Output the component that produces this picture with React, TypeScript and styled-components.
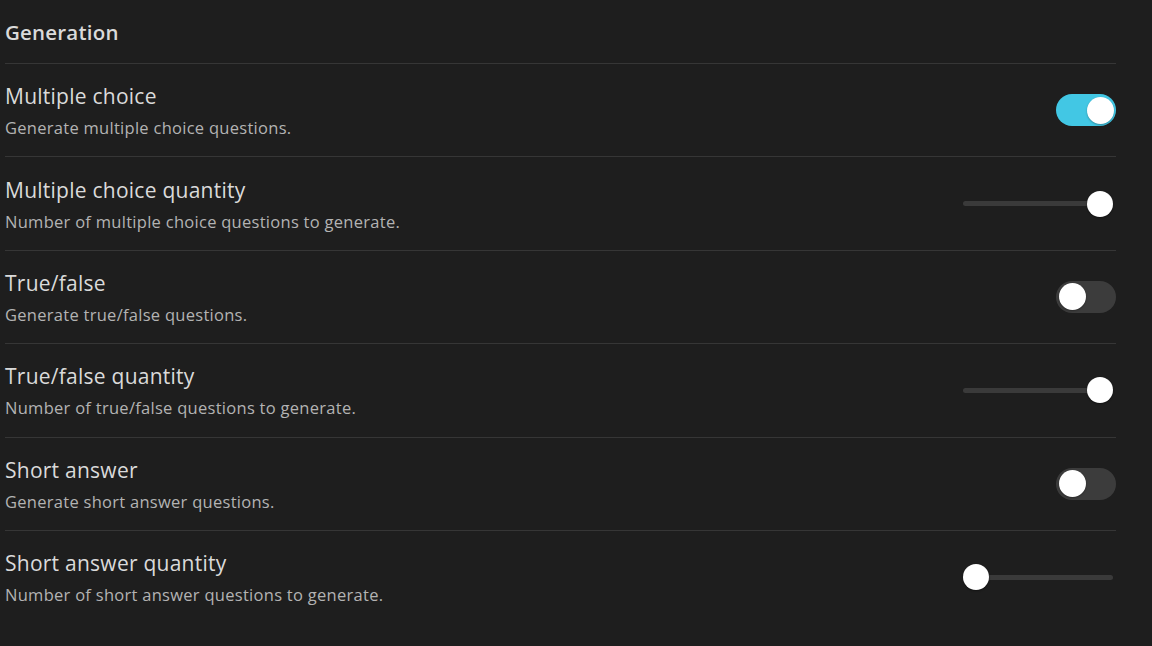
import React, { useState } from "react";
import styled, { createGlobalStyle } from "styled-components";

const Global = createGlobalStyle`
  html, body { margin: 0; padding: 0; background: #1e1e1e; }
  body { font-family: "Open Sans", "Noto Sans", sans-serif; color: #dadada; }
`;

const Page = styled.div`
  width: 1111px;
  padding-left: 5px;
  background: #1e1e1e;
  min-height: 646px;
  box-sizing: content-box;
`;

const Heading = styled.h2`
  margin: 0;
  height: 63px;
  display: flex;
  align-items: center;
  font-size: 20.5px;
  font-weight: 600;
  color: #dadada;
  letter-spacing: 0.2px;
`;

const Row = styled.div`
  box-sizing: border-box;
  height: 93.4px;
  border-top: 1px solid #363636;
  display: flex;
  align-items: center;
  justify-content: space-between;
`;

const Info = styled.div`
  display: flex;
  flex-direction: column;
  gap: 8px;
  padding-top: 2px;
`;

const Name = styled.div`
  font-size: 21px;
  line-height: 26px;
  color: #dadada;
  letter-spacing: 0.25px;
`;

const Desc = styled.div`
  font-size: 16.5px;
  line-height: 22px;
  color: #b3b3b3;
  letter-spacing: 0.28px;
`;

const ToggleTrack = styled.button<{ $on: boolean }>`
  position: relative;
  width: 60px;
  height: 32px;
  border-radius: 16px;
  border: none;
  padding: 0;
  cursor: pointer;
  background: ${(p) => (p.$on ? "#42c7e4" : "#3c3c3c")};
  flex-shrink: 0;
`;

const Knob = styled.span<{ $on: boolean }>`
  position: absolute;
  top: 2.5px;
  left: ${(p) => (p.$on ? "30.5px" : "2.5px")};
  width: 27px;
  height: 27px;
  border-radius: 50%;
  background: #ffffff;
  box-shadow: 0 1px 2px rgba(0, 0, 0, 0.3);
`;

const Range = styled.input`
  -webkit-appearance: none;
  appearance: none;
  width: 150px;
  height: 26px;
  margin: 0 3px 0 0;
  background: transparent;
  padding: 0;
  &::-webkit-slider-runnable-track {
    height: 5px;
    border-radius: 3px;
    background: #3a3a3a;
  }
  &::-webkit-slider-thumb {
    -webkit-appearance: none;
    appearance: none;
    width: 26px;
    height: 26px;
    border-radius: 50%;
    background: #ffffff;
    border: none;
    margin-top: -10.5px;
    box-shadow: 0 1px 2px rgba(0, 0, 0, 0.4);
  }
`;

type Setting =
  | { kind: "toggle"; name: string; desc: string; on: boolean }
  | { kind: "slider"; name: string; desc: string; value: number };

const settings: Setting[] = [
  { kind: "toggle", name: "Multiple choice", desc: "Generate multiple choice questions.", on: true },
  { kind: "slider", name: "Multiple choice quantity", desc: "Number of multiple choice questions to generate.", value: 100 },
  { kind: "toggle", name: "True/false", desc: "Generate true/false questions.", on: false },
  { kind: "slider", name: "True/false quantity", desc: "Number of true/false questions to generate.", value: 100 },
  { kind: "toggle", name: "Short answer", desc: "Generate short answer questions.", on: false },
  { kind: "slider", name: "Short answer quantity", desc: "Number of short answer questions to generate.", value: 0 },
];

function Toggle({ initial }: { initial: boolean }) {
  const [on, setOn] = useState(initial);
  return (
    <ToggleTrack $on={on} onClick={() => setOn(!on)} aria-pressed={on}>
      <Knob $on={on} />
    </ToggleTrack>
  );
}

function Slider({ initial }: { initial: number }) {
  const [v, setV] = useState(initial);
  return <Range type="range" min={0} max={100} value={v} onChange={(e) => setV(Number(e.target.value))} />;
}

export default function App() {
  return (
    <>
      <Global />
      <Page>
        <Heading>Generation</Heading>
        {settings.map((s) => (
          <Row key={s.name}>
            <Info>
              <Name>{s.name}</Name>
              <Desc>{s.desc}</Desc>
            </Info>
            {s.kind === "toggle" ? <Toggle initial={s.on} /> : <Slider initial={s.value} />}
          </Row>
        ))}
      </Page>
    </>
  );
}
